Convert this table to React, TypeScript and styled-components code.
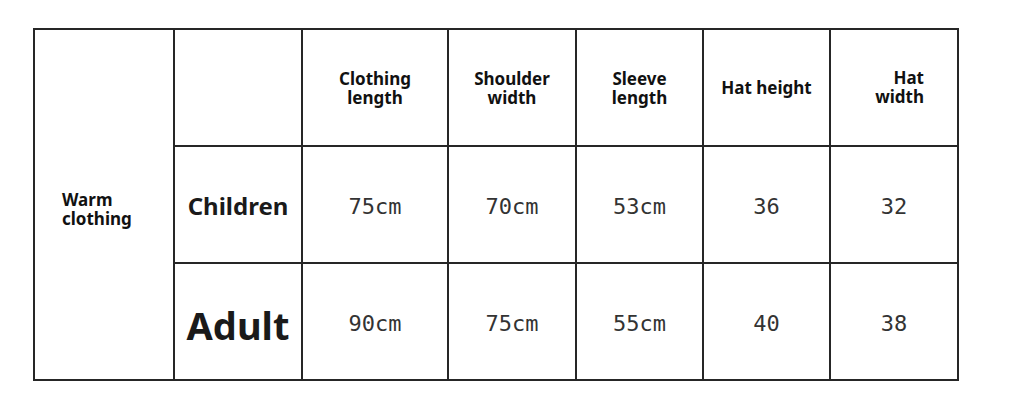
import React from 'react';
import styled, { createGlobalStyle } from 'styled-components';

const GlobalStyle = createGlobalStyle`
  html, body {
    margin: 0;
    padding: 0;
    background: #fff;
  }
`;

const Page = styled.div`
  width: 1024px;
  height: 410px;
  padding: 28px 0 0 33px;
  box-sizing: border-box;
  background: #fff;
`;

// 표 전체: 배경색을 선 색으로 쓰고 gap 으로 격자선을 만든다
const Grid = styled.div`
  display: inline-grid;
  grid-template-columns: 138px 126px 144px 126px 125px 125px 126px;
  grid-template-rows: 115px 115px 115px;
  gap: 2px;
  padding: 2px;
  background: #262626;
`;

const Cell = styled.div<{ $align?: 'left' | 'center' | 'right' }>`
  background: #fff;
  display: flex;
  align-items: center;
  justify-content: ${(p) =>
    p.$align === 'left' ? 'flex-start' : p.$align === 'right' ? 'flex-end' : 'center'};
  text-align: ${(p) => p.$align ?? 'center'};
`;

const SideCell = styled(Cell)`
  grid-row: 1 / span 3;
  padding: 8px 0 0 27px;
`;

const HatWidthCell = styled(Cell)`
  padding: 0 33px 2px 0;
`;

const HeadText = styled.div`
  font-family: 'Noto Sans', 'Open Sans', sans-serif;
  font-weight: 700;
  font-size: 17px;
  line-height: 19px;
  color: #111;
`;

const RowLabel = styled.div<{ $size: number }>`
  font-family: 'Noto Sans', 'Open Sans', sans-serif;
  font-weight: 700;
  font-size: ${(p) => p.$size}px;
  line-height: 1;
  color: #1a1a1a;
  padding-top: ${(p) => (p.$size > 30 ? 6 : 2)}px;
`;

const Value = styled.div`
  font-family: 'DejaVu Sans Mono', 'Liberation Mono', monospace;
  font-size: 22px;
  line-height: 1;
  color: #333;
  padding-top: 4px;
`;

const rows = [
  { label: 'Children', size: 24, values: ['75cm', '70cm', '53cm', '36', '32'] },
  { label: 'Adult', size: 38, values: ['90cm', '75cm', '55cm', '40', '38'] },
];

const App: React.FC = () => (
  <>
    <GlobalStyle />
    <Page>
      <Grid>
        <SideCell $align="left">
          <HeadText>
            Warm
            <br />
            clothing
          </HeadText>
        </SideCell>
        <Cell />
        <Cell>
          <HeadText>
            Clothing
            <br />
            length
          </HeadText>
        </Cell>
        <Cell>
          <HeadText>
            Shoulder
            <br />
            width
          </HeadText>
        </Cell>
        <Cell>
          <HeadText>
            Sleeve
            <br />
            length
          </HeadText>
        </Cell>
        <Cell>
          <HeadText>Hat height</HeadText>
        </Cell>
        <HatWidthCell $align="right">
          <HeadText>
            Hat
            <br />
            width
          </HeadText>
        </HatWidthCell>

        {rows.map((row) => (
          <React.Fragment key={row.label}>
            <Cell>
              <RowLabel $size={row.size}>{row.label}</RowLabel>
            </Cell>
            {row.values.map((v, i) => (
              <Cell key={i}>
                <Value>{v}</Value>
              </Cell>
            ))}
          </React.Fragment>
        ))}
      </Grid>
    </Page>
  </>
);

export default App;
